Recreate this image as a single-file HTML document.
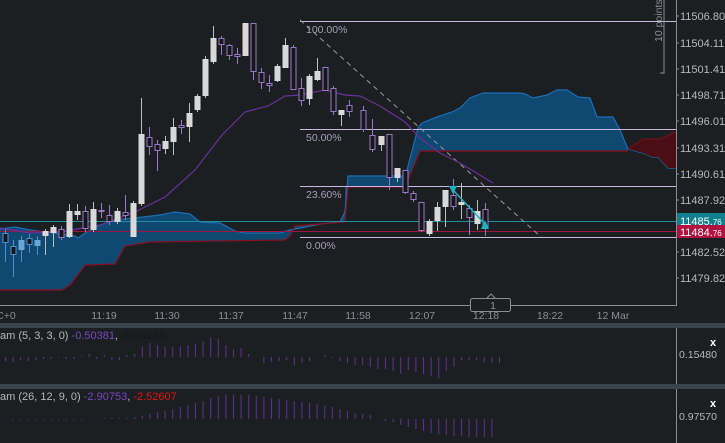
<!DOCTYPE html>
<html><head><meta charset="utf-8"><style>
html,body{margin:0;padding:0;background:#1c1f22;width:725px;height:443px;overflow:hidden}
svg{display:block}
text{font-family:"Liberation Sans",sans-serif}
</style></head><body>
<svg id="s" width="725" height="443" viewBox="0 0 725 443" xmlns="http://www.w3.org/2000/svg">
<rect width="725" height="443" fill="#1c1f22"/>
<!-- cloud blue -->
<path d="M0,229 L15,227 L30,230 L45,232 L60,234 L75,236 L78,238 L85,233 L100,225 L115,220 L135,218 L160,215 L175,212 L190,214 L200,222 L220,223 L235,231 L245,233 L280,233 L290,230 L300,228 L320,224 L340,222 L345,212 L348,176 L405,176 L407,170 L418,128 L422,123 L437,117 L452,112 L460,108 L470,98 L483,93 L520,93 L525,94 L533,98 L547,95 L557,90 L567,90 L578,97 L590,98 L597,117 L613,117 L620,130 L628,149 L628,151 L420,151 L405,187 L345,187 L345,222 L295,226 L290,236 L285,240 L150,242 L125,246 L115,264 L85,265 L80,272 L70,285 L62,290 L0,290 Z" fill="#0f4870"/>
<path d="M0,229 L15,227 L30,230 L45,232 L60,234 L75,236 L78,238 L85,233 L100,225 L115,220 L135,218 L160,215 L175,212 L190,214 L200,222 L220,223 L235,231 L245,233 L280,233 L290,230 L300,228 L320,224 L340,222 L345,212 L348,176 L405,176 L407,170 L418,128 L422,123 L437,117 L452,112 L460,108 L470,98 L483,93 L520,93 L525,94 L533,98 L547,95 L557,90 L567,90 L578,97 L590,98 L597,117 L613,117 L620,130 L628,149 L643,153 L652,157 L658,157 L668,168 L676,168" fill="none" stroke="#1a6fb5" stroke-width="1.2"/>
<!-- red future cloud -->
<path d="M628,149 L643,139 L660,139 L676,132 L676,168 L668,168 L658,157 L652,157 L643,153 Z" fill="#4b0e14"/>
<path d="M628,149 L643,139 L660,139 L676,132" fill="none" stroke="#7a0f1a"/>
<path d="M0,290 L62,290 L70,285 L80,272 L85,265 L115,264 L125,246 L150,242 L285,240 L290,236 L295,226 L345,222 L348,187 L405,187 L420,151 L628,151" fill="none" stroke="#8b0f1e" stroke-width="1.2"/>
<!-- fib lines -->
<g stroke="#cbb8dc" stroke-width="1">
<line x1="300" y1="21.5" x2="676" y2="21.5"/>
<line x1="300" y1="129.5" x2="676" y2="129.5"/>
<line x1="300" y1="186.5" x2="676" y2="186.5"/>
<line x1="300" y1="237.5" x2="676" y2="237.5"/>
</g>
<line x1="0" y1="221.5" x2="676" y2="221.5" stroke="#1b8fa0"/>
<line x1="0" y1="231.5" x2="676" y2="231.5" stroke="#a0143c"/>
<line x1="300" y1="20" x2="541" y2="237" stroke="#9a9a9a" stroke-dasharray="5,4"/>
<g fill="#a99dbb" font-size="10.5">
<text x="306" y="33">100.00%</text>
<text x="306" y="141">50.00%</text>
<text x="306" y="198">23.60%</text>
<text x="306" y="249">0.00%</text>
</g>
<!-- MA -->
<polyline points="0,228 30,233 60,232 100,225 135,212 165,197 195,170 222,135 245,112 268,106 285,96 300,95 325,90 345,95 360,96 380,106 405,122 420,138 440,153 460,163 493,183" fill="none" stroke="#6a2f9a" stroke-width="1.2"/>
<g id="candles"></g>
<!-- teal arrows -->
<line x1="453" y1="190" x2="485" y2="224" stroke="#19b4c0" stroke-width="1.5"/>
<path d="M449,186 L457,186 L453,194 Z" fill="#19b4c0"/>
<path d="M481,229 L489,229 L485,220 Z" fill="#19b4c0"/>
<!-- price axis -->
<line x1="676.5" y1="0" x2="676.5" y2="306" stroke="#8a8f94"/>
<line x1="0" y1="305.5" x2="676" y2="305.5" stroke="#8a8f94"/>
<g fill="#b4b8bc" font-size="11">
<text x="680" y="20">11506.80</text>
<text x="680" y="47">11504.11</text>
<text x="680" y="73">11501.41</text>
<text x="680" y="99">11498.71</text>
<text x="680" y="125">11496.01</text>
<text x="680" y="152">11493.31</text>
<text x="680" y="178">11490.61</text>
<text x="680" y="204">11487.92</text>
<text x="680" y="256">11482.52</text>
<text x="680" y="282">11479.82</text>
</g>
<g stroke="#8a8f94"><line x1="676" y1="16" x2="679" y2="16"/><line x1="676" y1="43" x2="679" y2="43"/><line x1="676" y1="69" x2="679" y2="69"/><line x1="676" y1="95" x2="679" y2="95"/><line x1="676" y1="121" x2="679" y2="121"/><line x1="676" y1="148" x2="679" y2="148"/><line x1="676" y1="174" x2="679" y2="174"/><line x1="676" y1="200" x2="679" y2="200"/><line x1="676" y1="252" x2="679" y2="252"/><line x1="676" y1="278" x2="679" y2="278"/></g>
<rect x="677" y="213" width="48" height="12" fill="#127f8e"/>
<text x="680" y="225" fill="#fff" font-size="11">11485.<tspan font-size="8">76</tspan></text>
<rect x="677" y="225" width="48" height="13" fill="#b0113e"/>
<text x="680" y="236" fill="#fff" font-size="11">11484.<tspan font-size="8">76</tspan></text>
<!-- 10 points -->
<path d="M664,0 L664,73 L660,73" fill="none" stroke="#8a8f94"/>
<text transform="translate(662,42) rotate(-90)" fill="#8a8f94" font-size="10.5">10 points</text>
<!-- time axis -->
<g fill="#8a8f94" font-size="10.5" text-anchor="middle">
<text x="6" y="319">C+0</text>
<text x="104" y="319">11:19</text>
<text x="167" y="319">11:30</text>
<text x="231" y="319">11:37</text>
<text x="295" y="319">11:47</text>
<text x="358" y="319">11:58</text>
<text x="422" y="319">12:07</text>
<text x="486" y="319">12:18</text>
<text x="550" y="319">18:22</text>
<text x="613" y="319">12 Mar</text>
</g>
<rect x="470.5" y="298.5" width="40" height="13" rx="2" fill="#1c1f22" stroke="#8a8f94"/>
<path d="M487,298 L491,294 L495,298" fill="#1c1f22" stroke="#8a8f94"/>
<text x="493" y="309" fill="#8a8f94" font-size="10.5" text-anchor="middle">1</text>
<!-- separators -->
<rect x="0" y="323" width="725" height="5" fill="#3a444c"/>
<rect x="0" y="384" width="725" height="5" fill="#3a444c"/>
<line x1="676.5" y1="328" x2="676.5" y2="384" stroke="#8a8f94"/>
<line x1="676.5" y1="389" x2="676.5" y2="443" stroke="#8a8f94"/>
<g id="hist"></g>
<text x="0" y="339" font-size="11" fill="#b4b8bc">am (5, 3, 3, 0) <tspan fill="#7a45c0">-0.50381</tspan>, <tspan fill="#15181a">-0.43343</tspan></text>
<text x="0" y="400" font-size="11" fill="#b4b8bc">am (26, 12, 9, 0) <tspan fill="#7a45c0">-2.90753</tspan>, <tspan fill="#e01414">-2.52607</tspan></text>
<text x="679" y="358" font-size="10.5" fill="#b4b8bc">0.15480</text>
<text x="679" y="420" font-size="10.5" fill="#b4b8bc">0.97570</text>
<text x="710" y="346" font-size="11" font-weight="bold" fill="#fff">x</text>
<text x="710" y="407" font-size="11" font-weight="bold" fill="#fff">x</text>
</svg>
<script>
var NS="http://www.w3.org/2000/svg";
function el(p,t,a){var e=document.createElementNS(NS,t);for(var k in a)e.setAttribute(k,a[k]);p.appendChild(e);return e;}
var g=document.getElementById("candles");
var C=[[5,233,243,229,262,'b'],[13,246,255,240,277,'b'],[21,240,250,236,262,'B'],[29,238,245,234,253,'b'],[37,240,246,236,255,'B'],[45,231,236,229,255,'w'],[53,227,233,225,247,'w'],[61,229,238,226,240,'p'],[69,211,237,204,238,'w'],[77,211,215,204,220,'w'],[85,211,229,206,232,'p'],[93,209,230,202,232,'w'],[101,210,212,203,218,'p'],[109,215,222,205,225,'p'],[117,211,222,208,224,'w'],[125,212,216,195,220,'p'],[133,203,237,201,226,'w'],[141,134,204,98,206,'w'],[149,137,147,127,155,'p'],[157,144,151,140,171,'p'],[165,141,149,136,154,'w'],[173,127,142,118,155,'w'],[181,125,128,120,134,'p'],[189,113,127,103,142,'w'],[197,96,110,94,112,'w'],[205,59,96,56,98,'w'],[213,38,62,26,64,'w'],[221,38,45,36,55,'p'],[229,45,56,44,60,'p'],[237,54,57,48,64,'p'],[245,23,56,23,56,'w'],[253,23,72,23,80,'p'],[261,72,83,68,89,'p'],[269,83,86,75,92,'p'],[277,66,81,64,82,'w'],[285,45,68,38,68,'w'],[293,47,90,45,90,'p'],[301,88,101,78,106,'p'],[309,76,99,74,105,'w'],[317,71,80,58,81,'w'],[325,67,91,67,91,'p'],[333,88,112,86,115,'p'],[341,110,115,110,126,'w'],[349,105,112,100,117,'p'],[363,110,130,106,132,'p'],[372,135,150,119,152,'p'],[381,136,145,136,151,'w'],[389,134,178,134,190,'p'],[397,168,178,168,182,'w'],[405,170,193,170,194,'p'],[413,193,200,191,202,'p'],[421,202,231,202,232,'p'],[429,221,234,219,236,'w'],[437,207,221,202,231,'w'],[445,190,207,190,227,'w'],[453,195,207,179,210,'p'],[461,202,205,183,219,'w'],[469,208,218,205,235,'p'],[477,211,224,200,230,'w'],[485,209,229,203,236,'p']];
C.forEach(function(c){
 var x=c[0],t=c[5];
 var col=t=='w'?'#bdbdbd':(t=='p'?'#9a78c4':'#4e8fcf');
 el(g,'line',{x1:x+0.5,y1:c[3],x2:x+0.5,y2:c[4],stroke:col});
 var h=Math.max(2,c[2]-c[1]);
 if(t=='w') el(g,'rect',{x:x-2.5,y:c[1],width:6,height:h,fill:'#d9d9d9'});
 else if(t=='B') el(g,'rect',{x:x-2.5,y:c[1],width:6,height:h,fill:'#6aa6d8'});
 else el(g,'rect',{x:x-2,y:c[1]+0.5,width:5,height:h-1,fill:'#15171a',stroke:col});
});
var hg=document.getElementById("hist");
var h1=[-4,-5,-3,-4,-3,-2,-2,-1,-2,-2,1,3,-2,2,-3,-3,2,3,10,14,12,10,10,11,12,13,16,20,18,12,8,9,3,0,-6,-5,-4,-3,-8,-6,-4,0,2,-1,-4,-6,-8,-8,-10,-12,-12,-14,-17,-13,-15,-17,-19,-21,-14,-10,-3,-3,-3,-5,-6,-6];
var h2=[0,-1,-1,-1,-1,-1,-1,-1,-1,-1,-1,0,0,1,1,1,1,2,3,5,7,8,10,12,14,16,18,21,23,24,24,24,24,23,22,21,20,19,18,17,16,15,13,12,10,8,6,5,4,0,-2,-3,-6,-8,-10,-12,-14,-15,-16,-17,-17,-18,-18,-18,-18];
function drawH(arr,base,step){arr.forEach(function(v,i){if(v==0)return;var x=5+i*step+0.5;el(hg,'line',{x1:x,y1:base,x2:x,y2:base-v,stroke:'#5e2d8f','stroke-width':1.1});});}
drawH(h1,357,7.6);
drawH(h2,419,7.6);
</script>
</body></html>
